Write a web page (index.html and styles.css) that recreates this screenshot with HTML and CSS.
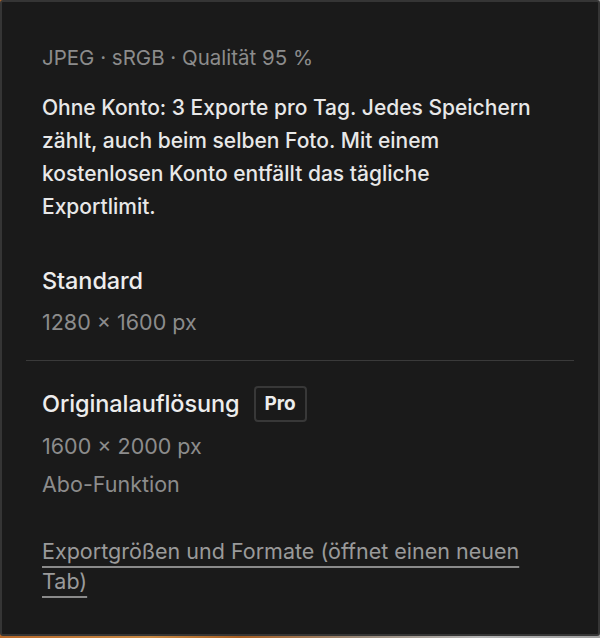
FILE: index.html
```html
<!DOCTYPE html>
<html lang="de">
<head>
<meta charset="utf-8">
<link rel="stylesheet" href="styles.css">
</head>
<body>
<div class="panel">
  <section class="intro">
    <p class="meta">JPEG · sRGB · Qualität 95 %</p>
    <p class="note">Ohne Konto: 3 Exporte pro Tag. Jedes Speichern zählt, auch beim selben Foto. Mit einem kostenlosen Konto entfällt das tägliche Exportlimit.</p>
  </section>
  <section class="option option-first">
    <h3 class="opt-title">Standard</h3>
    <p class="opt-size">1280 × 1600 px</p>
  </section>
  <hr class="divider">
  <section class="option option-pro">
    <div class="title-row">
      <h3 class="opt-title">Originalauflösung</h3>
      <span class="badge">Pro</span>
    </div>
    <p class="opt-size">1600 × 2000 px</p>
    <p class="opt-sub">Abo-Funktion</p>
  </section>
  <section class="links">
    <a class="help-link" href="#">Exportgrößen und Formate (öffnet einen neuen Tab)</a>
  </section>
</div>
</body>
</html>
```
FILE: styles.css
```css
html, body {
  margin: 0;
  padding: 0;
}
body {
  width: 600px;
  height: 638px;
  background: linear-gradient(90deg, #b8692a 0%, #c98a45 25%, #a85f22 40%, #9a8a7a 60%, #b5b5b5 80%, #a0a0a0 100%);
  font-family: "Inter", "Noto Sans", sans-serif;
  overflow: hidden;
}
.panel {
  box-sizing: border-box;
  width: 600px;
  height: 636px;
  background: #1a1a1a;
  border: 2px solid #353535;
  border-radius: 3px;
  padding: 42px 24px 0;
  display: flex;
  flex-direction: column;
}
p, h3 {
  margin: 0;
}
.intro, .option, .links {
  padding: 0 16px;
}
.meta {
  color: #8c8c8c;
  font-size: 20.5px;
  line-height: 28px;
  letter-spacing: 0;
}
.note {
  margin-top: 19px;
  max-width: 494px;
  color: #e8e8e8;
  font-size: 21px;
  font-weight: 500;
  line-height: 33px;
  letter-spacing: 0;
}
.option-first {
  margin-top: 43px;
}
.opt-title {
  color: #ededed;
  font-size: 23.5px;
  font-weight: 500;
  line-height: 30px;
  letter-spacing: -0.1px;
}
.opt-size {
  margin-top: 12px;
  color: #8c8c8c;
  font-size: 21.5px;
  line-height: 28px;
}
.divider {
  border: 0;
  height: 1px;
  background: #3a3a3a;
  margin: 24px 0 0;
}
.option-pro {
  margin-top: 25px;
}
.title-row {
  display: flex;
  align-items: center;
  gap: 14px;
  height: 36px;
}
.badge {
  box-sizing: border-box;
  height: 36px;
  padding: 0 9px;
  border: 2px solid #383838;
  border-radius: 4px;
  color: #ededed;
  font-size: 19px;
  font-weight: 700;
  line-height: 32px;
}
.option-pro .opt-size {
  margin-top: 10px;
}
.opt-sub {
  margin-top: 10px;
  color: #8c8c8c;
  font-size: 21.5px;
  line-height: 28px;
}
.links {
  margin-top: 38px;
  padding-right: 40px;
}
.help-link {
  color: #9a9a9a;
  font-size: 21.5px;
  line-height: 30px;
  text-decoration: underline;
  text-decoration-thickness: 2px;
  text-underline-offset: 7px;
  text-decoration-color: #8a8a8a;
}
```
